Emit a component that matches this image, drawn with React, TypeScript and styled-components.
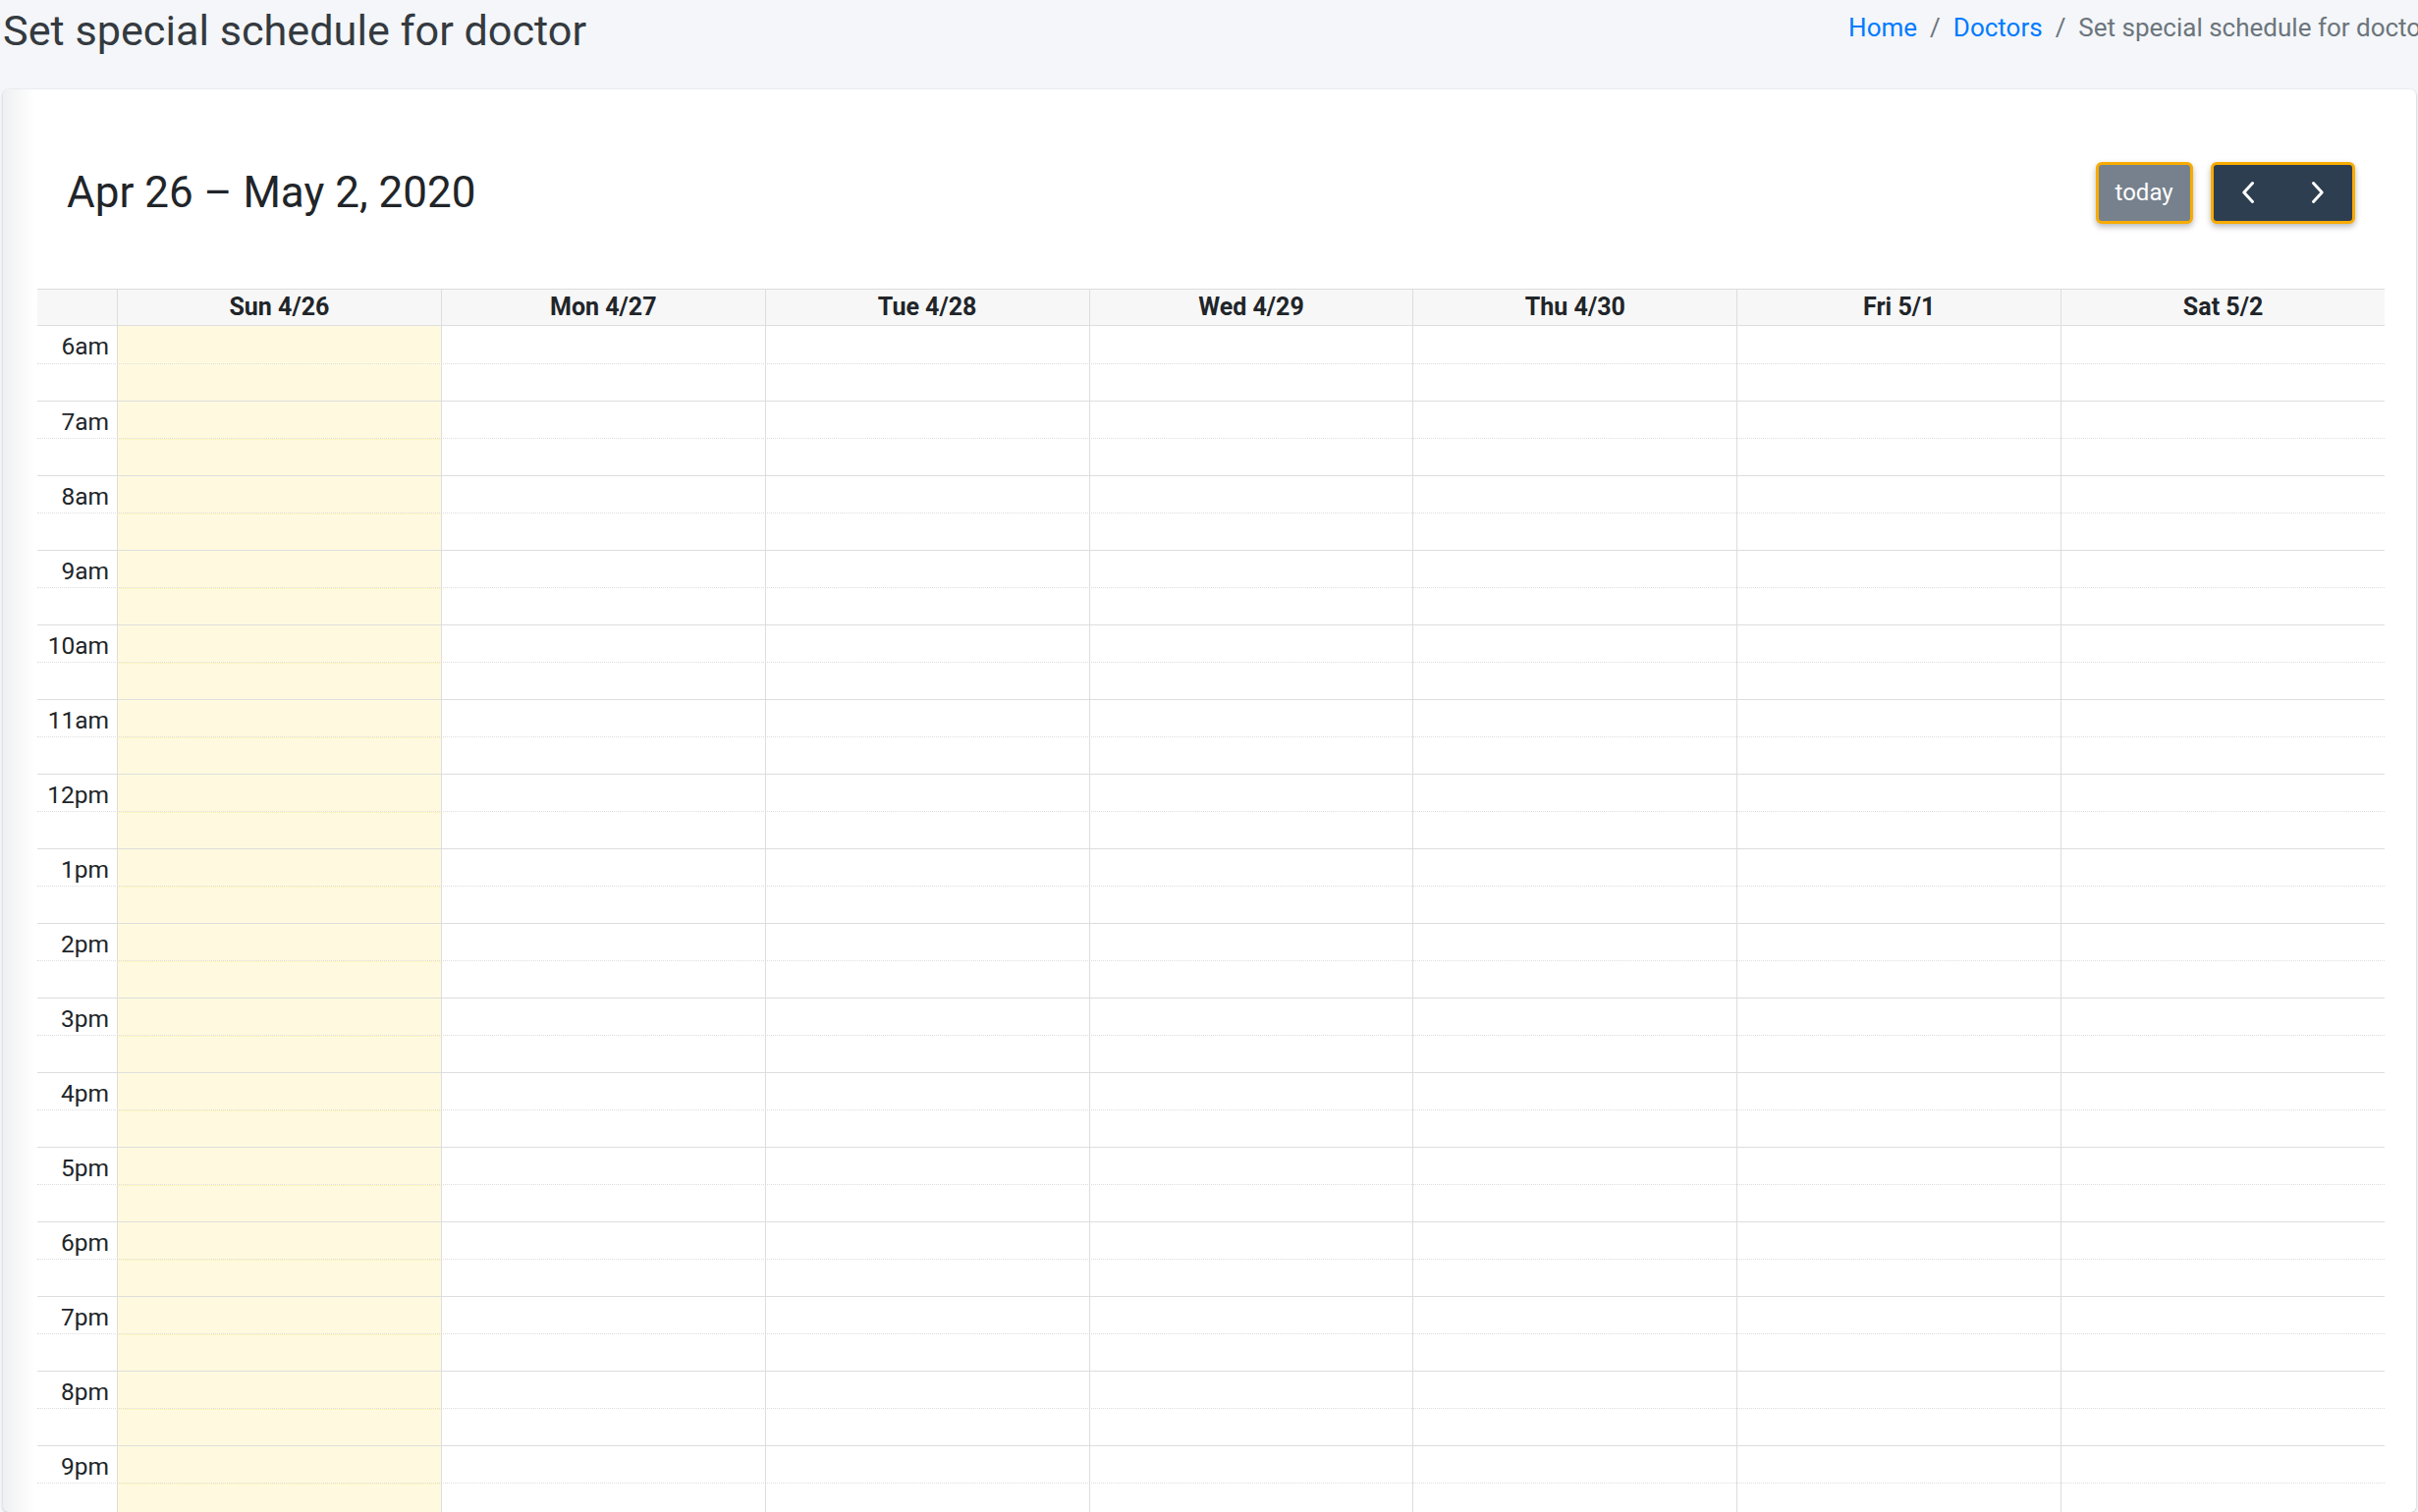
import React from "react";
import styled, { createGlobalStyle, css } from "styled-components";

const GlobalStyle = createGlobalStyle`
  html, body {
    margin: 0;
    padding: 0;
    overflow: hidden;
    height: 100%;
  }
  body {
    background: #f4f6f9;
    font-family: Roboto, "Liberation Sans", Arial, sans-serif;
    color: #212529;
  }
  * { box-sizing: border-box; }
`;

const ORANGE = "#f9ab00";
const BORDER = "#dddddd";

const Page = styled.div`
  padding-left: 3px;
  height: 100vh;
  display: flex;
  flex-direction: column;
`;

const ContentHeader = styled.div`
  display: flex;
  justify-content: space-between;
  align-items: flex-start;
  padding: 6px 0 33px;
  margin-right: -12px;
  white-space: nowrap;
`;

const PageTitle = styled.h1`
  margin: 0;
  font-size: 43.2px;
  font-weight: 400;
  line-height: 1.2;
  color: #343a40;
`;

const Breadcrumb = styled.ol`
  list-style: none;
  display: flex;
  margin: 2.6px 0 0;
  padding: 0;
  font-size: 26px;
  line-height: 1.5;
`;

const Crumb = styled.li<{ $active?: boolean }>`
  color: ${(p) => (p.$active ? "#6c757d" : "#007bff")};
  &:not(:first-child)::before {
    content: "/";
    color: #6c757d;
    padding: 0 13px;
  }
`;

const CrumbLink = styled.a`
  color: #007bff;
  text-decoration: none;
`;

const Card = styled.section`
  flex: 1;
  margin-right: 2px;
  background: linear-gradient(90deg, #eff0f2 0px, #ffffff 32px);
  border-radius: 6px;
  box-shadow: 0 0 1px rgba(0, 0, 0, 0.125), 0 1px 3px rgba(0, 0, 0, 0.2);
  padding: 74px 32px 0 35px;
  overflow: hidden;
`;

const Toolbar = styled.div`
  display: flex;
  justify-content: space-between;
  align-items: center;
  padding: 0 30px;
  margin-bottom: 66px;
`;

const ToolbarTitle = styled.h2`
  margin: 0;
  font-size: 44px;
  font-weight: 400;
  line-height: 1.2;
  color: #212529;
`;

const ButtonArea = styled.div`
  display: flex;
  align-items: center;
  gap: 18px;
`;

const TodayButton = styled.button`
  font-family: inherit;
  font-size: 24px;
  line-height: 36px;
  padding: 10.5px 17px;
  color: #ffffff;
  background: #76818d;
  border: 3px solid ${ORANGE};
  border-radius: 6px;
  box-shadow: 0 3px 6px rgba(0, 0, 0, 0.28);
`;

const NavGroup = styled.div`
  display: flex;
  border: 3px solid ${ORANGE};
  border-radius: 6px;
  background: #2c3e50;
  box-shadow: 0 3px 6px rgba(0, 0, 0, 0.28);
  overflow: hidden;
`;

const NavButton = styled.button`
  width: 70.7px;
  height: 57px;
  display: flex;
  align-items: center;
  justify-content: center;
  background: transparent;
  border: none;
  padding: 0;
`;

const Grid = styled.div`
  display: flex;
  flex-direction: column;
`;

const columns = css`
  display: grid;
  grid-template-columns: 81px repeat(7, 1fr);
`;

const HeaderRow = styled.div`
  ${columns};
  height: 38px;
  border-top: 1px solid ${BORDER};
  border-bottom: 1px solid ${BORDER};
  background: #f7f7f7;
`;

const HeaderCell = styled.div<{ $axis?: boolean }>`
  border-left: ${(p) => (p.$axis ? "none" : `1px solid ${BORDER}`)};
  font-size: 25px;
  font-weight: 700;
  line-height: 36px;
  text-align: center;
  color: #212529;
  white-space: nowrap;
`;

const SlotRow = styled.div<{ $minor: boolean; $first: boolean }>`
  ${columns};
  height: 38px;
  border-top: ${(p) =>
    p.$first ? "none" : p.$minor ? `1px dotted ${BORDER}` : `1px solid ${BORDER}`};
`;

const AxisLabel = styled.div`
  font-size: 24.5px;
  line-height: 36px;
  padding-top: 3px;
  text-align: right;
  padding-right: 8px;
  color: #212529;
  white-space: nowrap;
`;

const DayCell = styled.div<{ $today?: boolean }>`
  border-left: 1px solid ${BORDER};
  background: ${(p) => (p.$today ? "rgba(255, 220, 40, 0.15)" : "transparent")};
`;

const Chevron = ({ dir }: { dir: "left" | "right" }) => (
  <svg width="16" height="24" viewBox="0 0 16 24" fill="none">
    <polyline
      points={dir === "left" ? "12.5,2.5 3.8,12 12.5,21.5" : "3.5,2.5 12.2,12 3.5,21.5"}
      stroke="#ffffff"
      strokeWidth="3"
      strokeLinecap="round"
      strokeLinejoin="round"
    />
  </svg>
);

const days = ["Sun 4/26", "Mon 4/27", "Tue 4/28", "Wed 4/29", "Thu 4/30", "Fri 5/1", "Sat 5/2"];

const hourLabel = (h: number) => {
  const suffix = h < 12 ? "am" : "pm";
  const v = h % 12 === 0 ? 12 : h % 12;
  return `${v}${suffix}`;
};

const slots: { hour: number; minor: boolean }[] = [];
for (let h = 6; h < 24; h++) {
  slots.push({ hour: h, minor: false });
  slots.push({ hour: h, minor: true });
}

export default function App() {
  return (
    <>
      <GlobalStyle />
      <Page>
        <ContentHeader>
          <PageTitle>Set special schedule for doctor</PageTitle>
          <Breadcrumb>
            <Crumb>
              <CrumbLink href="#">Home</CrumbLink>
            </Crumb>
            <Crumb>
              <CrumbLink href="#">Doctors</CrumbLink>
            </Crumb>
            <Crumb $active>Set special schedule for doctor</Crumb>
          </Breadcrumb>
        </ContentHeader>
        <Card>
          <Toolbar>
            <ToolbarTitle>Apr 26 – May 2, 2020</ToolbarTitle>
            <ButtonArea>
              <TodayButton type="button">today</TodayButton>
              <NavGroup>
                <NavButton type="button" aria-label="prev">
                  <Chevron dir="left" />
                </NavButton>
                <NavButton type="button" aria-label="next">
                  <Chevron dir="right" />
                </NavButton>
              </NavGroup>
            </ButtonArea>
          </Toolbar>
          <Grid>
            <HeaderRow>
              <HeaderCell $axis />
              {days.map((d) => (
                <HeaderCell key={d}>{d}</HeaderCell>
              ))}
            </HeaderRow>
            {slots.map((s, i) => (
              <SlotRow key={i} $minor={s.minor} $first={i === 0}>
                <AxisLabel>{s.minor ? "" : hourLabel(s.hour)}</AxisLabel>
                {days.map((d, j) => (
                  <DayCell key={d} $today={j === 0} />
                ))}
              </SlotRow>
            ))}
          </Grid>
        </Card>
      </Page>
    </>
  );
}
